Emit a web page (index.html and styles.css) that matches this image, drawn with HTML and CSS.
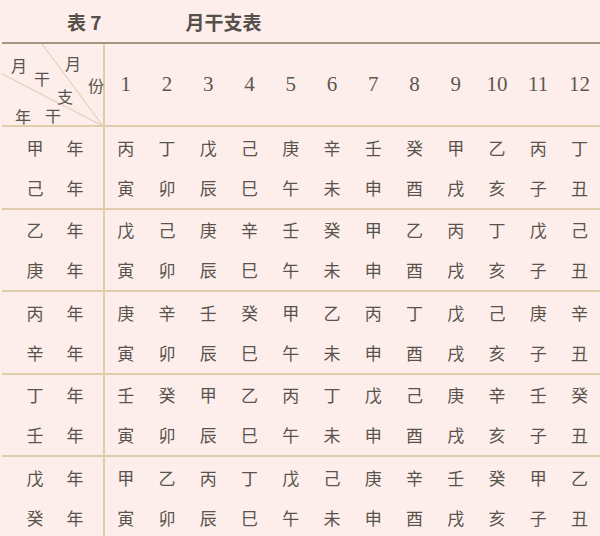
FILE: index.html
```html
<!DOCTYPE html>
<html lang="zh">
<head>
<meta charset="utf-8">
<title>月干支表</title>
<link rel="stylesheet" href="styles.css">
</head>
<body>
<div class="page">
  <div class="title"><span class="t-num">表 7</span><span class="t-name">月干支表</span></div>
  <div class="table">
    <div class="row head">
      <div class="corner">
        <svg class="diag" viewBox="0 0 101 81" preserveAspectRatio="none"><line x1="40" y1="0" x2="101" y2="82"/><line x1="0" y1="30" x2="101" y2="82"/></svg>
        <span class="c c1">月</span><span class="c c2">月</span><span class="c c3">干</span><span class="c c4">份</span><span class="c c5">支</span><span class="c c6">年</span><span class="c c7">干</span>
      </div>
      <div class="nums"><span>1</span><span>2</span><span>3</span><span>4</span><span>5</span><span>6</span><span>7</span><span>8</span><span>9</span><span>10</span><span>11</span><span>12</span></div>
    </div>
    <div class="row group">
      <div class="years"><span>甲</span><span>年</span><span>己</span><span>年</span></div>
      <div class="cells"><span>丙</span><span>丁</span><span>戊</span><span>己</span><span>庚</span><span>辛</span><span>壬</span><span>癸</span><span>甲</span><span>乙</span><span>丙</span><span>丁</span><span>寅</span><span>卯</span><span>辰</span><span>巳</span><span>午</span><span>未</span><span>申</span><span>酉</span><span>戌</span><span>亥</span><span>子</span><span>丑</span></div>
    </div>
    <div class="row group">
      <div class="years"><span>乙</span><span>年</span><span>庚</span><span>年</span></div>
      <div class="cells"><span>戊</span><span>己</span><span>庚</span><span>辛</span><span>壬</span><span>癸</span><span>甲</span><span>乙</span><span>丙</span><span>丁</span><span>戊</span><span>己</span><span>寅</span><span>卯</span><span>辰</span><span>巳</span><span>午</span><span>未</span><span>申</span><span>酉</span><span>戌</span><span>亥</span><span>子</span><span>丑</span></div>
    </div>
    <div class="row group">
      <div class="years"><span>丙</span><span>年</span><span>辛</span><span>年</span></div>
      <div class="cells"><span>庚</span><span>辛</span><span>壬</span><span>癸</span><span>甲</span><span>乙</span><span>丙</span><span>丁</span><span>戊</span><span>己</span><span>庚</span><span>辛</span><span>寅</span><span>卯</span><span>辰</span><span>巳</span><span>午</span><span>未</span><span>申</span><span>酉</span><span>戌</span><span>亥</span><span>子</span><span>丑</span></div>
    </div>
    <div class="row group">
      <div class="years"><span>丁</span><span>年</span><span>壬</span><span>年</span></div>
      <div class="cells"><span>壬</span><span>癸</span><span>甲</span><span>乙</span><span>丙</span><span>丁</span><span>戊</span><span>己</span><span>庚</span><span>辛</span><span>壬</span><span>癸</span><span>寅</span><span>卯</span><span>辰</span><span>巳</span><span>午</span><span>未</span><span>申</span><span>酉</span><span>戌</span><span>亥</span><span>子</span><span>丑</span></div>
    </div>
    <div class="row group">
      <div class="years"><span>戊</span><span>年</span><span>癸</span><span>年</span></div>
      <div class="cells"><span>甲</span><span>乙</span><span>丙</span><span>丁</span><span>戊</span><span>己</span><span>庚</span><span>辛</span><span>壬</span><span>癸</span><span>甲</span><span>乙</span><span>寅</span><span>卯</span><span>辰</span><span>巳</span><span>午</span><span>未</span><span>申</span><span>酉</span><span>戌</span><span>亥</span><span>子</span><span>丑</span></div>
    </div>
  </div>
</div>
</body>
</html>
```
FILE: styles.css
```css
* { box-sizing: border-box; }
body {
  margin: 0;
  width: 600px;
  height: 536px;
  overflow: hidden;
  background: #fdeeeb;
  color: #58534c;
  font-family: "Noto Sans CJK SC", "Noto Sans", sans-serif;
}
.page { padding-left: 2px; }
.title {
  height: 42px;
  display: flex;
  align-items: center;
  font-size: 19px;
  font-weight: 700;
  color: #555049;
  padding-top: 1px;
}
.t-num { margin-left: 65px; }
.t-name { margin-left: 84px; }
.table { border-top: 2px solid #a39784; }
.row {
  display: grid;
  grid-template-columns: 103px 1fr;
}
.head { height: 81px; }
.group {
  height: 82.5px;
  border-top: 2px solid #dfcdac;
}
.corner {
  position: relative;
  border-right: 2px solid #dfcdac;
}
.diag {
  position: absolute;
  left: 0;
  top: 0;
  width: 101px;
  height: 81px;
  overflow: visible;
}
.diag line { stroke: #dcc9a6; stroke-width: 1; }
.c {
  position: absolute;
  font-size: 16px;
  line-height: 16px;
  width: 16px;
  text-align: center;
  transform: translate(-50%, -50%);
}
.c1 { left: 17px; top: 21px; }
.c2 { left: 71px; top: 19px; }
.c3 { left: 40px; top: 34px; }
.c4 { left: 94px; top: 41px; }
.c5 { left: 63px; top: 52px; }
.c6 { left: 21px; top: 72px; }
.c7 { left: 51px; top: 71px; }
.nums {
  display: grid;
  grid-template-columns: repeat(12, 1fr);
  align-items: center;
  justify-items: center;
  font-family: "Liberation Serif", serif;
  font-size: 21px;
  color: #5c574f;
}
.years {
  border-right: 2px solid #dfcdac;
  display: grid;
  grid-template-columns: 40px 40px;
  grid-template-rows: 1fr 1fr;
  align-items: center;
  justify-items: center;
  padding-left: 13px;
  font-size: 17px;
}
.cells {
  display: grid;
  grid-template-columns: repeat(12, 1fr);
  grid-template-rows: 1fr 1fr;
  align-items: center;
  justify-items: center;
  font-size: 17px;
}
```
